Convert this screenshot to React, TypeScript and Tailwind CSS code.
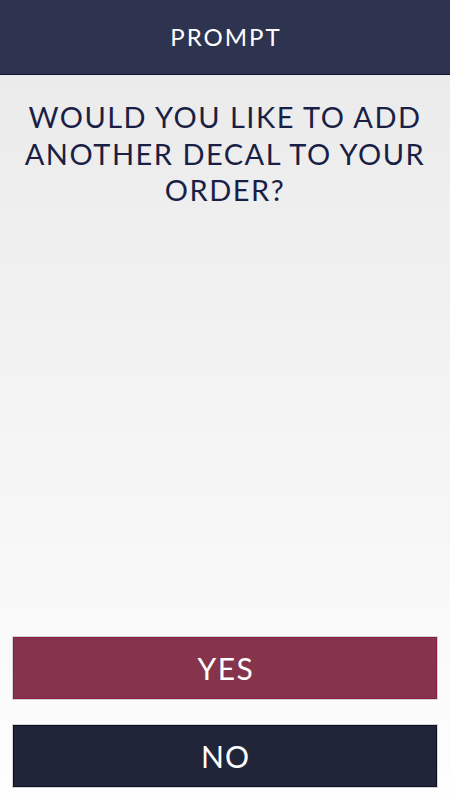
import React from "react";

export default function App() {
  const font = { fontFamily: "Lato, 'Noto Sans', sans-serif" };
  return (
    <div
      className="flex h-[800px] w-[450px] flex-col bg-gradient-to-b from-[#e9e9e9] to-[#fefefe]"
      style={font}
    >
      <header className="flex h-[75px] shrink-0 items-center justify-center border-b border-[#10122e] bg-[#2e3450]">
        <span className="pl-[2px] text-[24px] tracking-[2px] text-white">PROMPT</span>
      </header>
      <main className="flex flex-1 flex-col px-[13px] pb-[13px]">
        <h1 className="mt-[24px] text-center text-[29px] leading-[36.7px] tracking-[1.5px] text-[#1a1f45]">
          WOULD YOU LIKE TO ADD
          <br />
          ANOTHER DECAL TO YOUR
          <br />
          ORDER?
        </h1>
        <div className="mt-auto flex flex-col gap-[26px]">
          <button className="flex h-[62px] items-center justify-center border border-[#8a1d41] bg-[#86344b] pl-[2px] text-[30px] tracking-[1.5px] text-white shadow-[0_0_0_1px_#d4d4d4]">
            YES
          </button>
          <button className="flex h-[62px] items-center justify-center border border-[#0d0f1e] bg-[#212539] pl-[1px] text-[30px] tracking-[1px] text-white shadow-[0_0_0_1px_#d4d4d4]">
            NO
          </button>
        </div>
      </main>
    </div>
  );
}
